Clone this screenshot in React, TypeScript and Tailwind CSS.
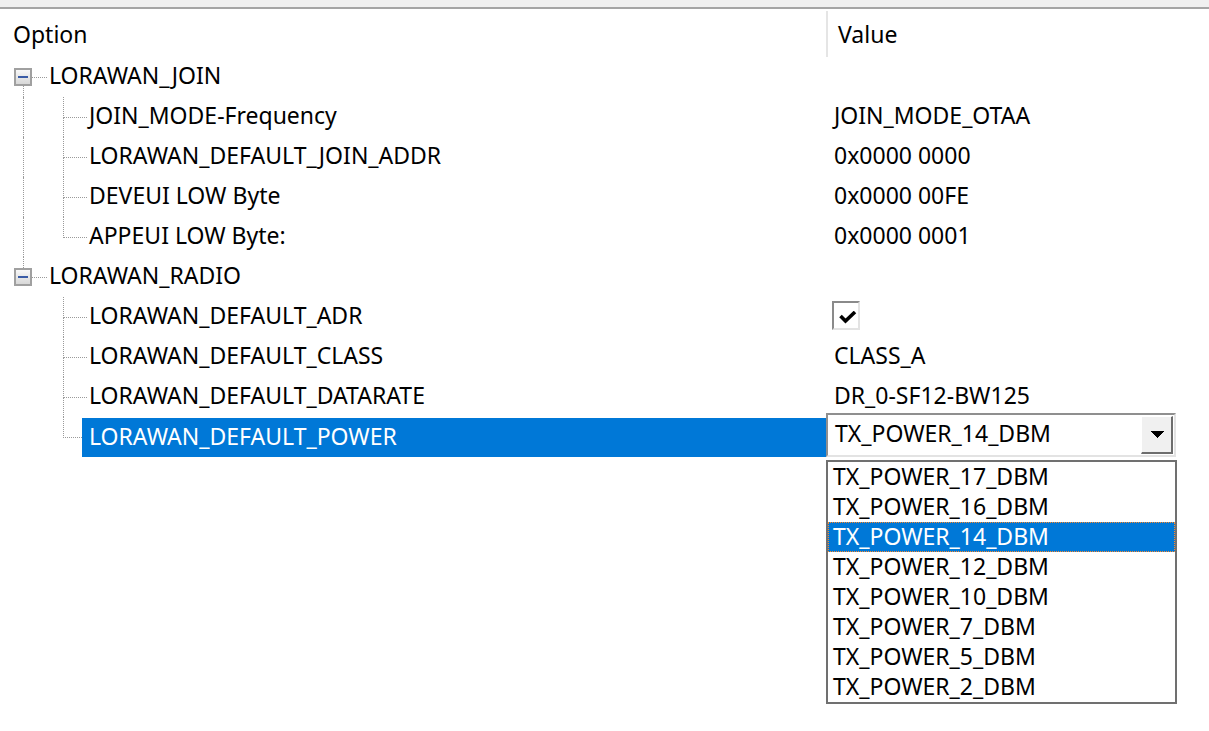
import React from "react";

type Row =
  | { kind: "parent"; label: string; first: boolean; hasNext: boolean }
  | {
      kind: "child";
      label: string;
      value?: string;
      check?: boolean;
      combo?: boolean;
      parentHasNext: boolean;
      last: boolean;
      selected?: boolean;
    };

const rows: Row[] = [
  { kind: "parent", label: "LORAWAN_JOIN", first: true, hasNext: true },
  { kind: "child", label: "JOIN_MODE-Frequency", value: "JOIN_MODE_OTAA", parentHasNext: true, last: false },
  { kind: "child", label: "LORAWAN_DEFAULT_JOIN_ADDR", value: "0x0000 0000", parentHasNext: true, last: false },
  { kind: "child", label: "DEVEUI LOW Byte", value: "0x0000 00FE", parentHasNext: true, last: false },
  { kind: "child", label: "APPEUI LOW Byte:", value: "0x0000 0001", parentHasNext: true, last: true },
  { kind: "parent", label: "LORAWAN_RADIO", first: false, hasNext: false },
  { kind: "child", label: "LORAWAN_DEFAULT_ADR", check: true, parentHasNext: false, last: false },
  { kind: "child", label: "LORAWAN_DEFAULT_CLASS", value: "CLASS_A", parentHasNext: false, last: false },
  { kind: "child", label: "LORAWAN_DEFAULT_DATARATE", value: "DR_0-SF12-BW125", parentHasNext: false, last: false },
  { kind: "child", label: "LORAWAN_DEFAULT_POWER", combo: true, parentHasNext: false, last: true, selected: true },
];

const options = [
  "TX_POWER_17_DBM",
  "TX_POWER_16_DBM",
  "TX_POWER_14_DBM",
  "TX_POWER_12_DBM",
  "TX_POWER_10_DBM",
  "TX_POWER_7_DBM",
  "TX_POWER_5_DBM",
  "TX_POWER_2_DBM",
];

const dot = "border-dotted border-[#9a9a9a]";

function Expander() {
  return (
    <div className="w-[18px] h-[18px] border-2 border-[#a0a0a0] bg-gradient-to-b from-[#f8f8f8] to-[#d8d8d8] flex items-center justify-center">
      <div className="w-[10px] h-[2px] bg-[#3a5ca6]" />
    </div>
  );
}

function Text({ children, className = "" }: { children: React.ReactNode; className?: string }) {
  return <span className={"leading-[36px] pb-[4px] whitespace-nowrap " + className}>{children}</span>;
}

function CheckBox() {
  return (
    <div className="w-[28px] h-[29px] border-t-2 border-l-2 border-t-[#8a8a8a] border-l-[#8a8a8a] border-b-2 border-r-2 border-b-[#e3e3e3] border-r-[#e3e3e3] bg-white flex items-start">
      <svg width="18" height="13" viewBox="0 0 18 13" className="mt-[8px] ml-[5px]">
        <path d="M1.5 5 L6.5 10 L16 1" stroke="#000" strokeWidth="3.6" fill="none" />
      </svg>
    </div>
  );
}

function Combo() {
  return (
    <div className="relative -mt-[4px]">
      <div className="w-[350px] h-[44px] border-t-2 border-l-2 border-t-[#8f8f8f] border-l-[#8f8f8f] border-b-2 border-r-2 border-b-[#e3e3e3] border-r-[#e3e3e3] bg-white flex items-stretch p-[1px]">
        <div className="flex-1 flex items-center pl-[6px]">
          <Text>TX_POWER_14_DBM</Text>
        </div>
        <div className="w-[32px] bg-[#f0f0f0] border-t border-l border-t-white border-l-white border-b-2 border-r-2 border-b-[#6d6d6d] border-r-[#6d6d6d] flex items-center justify-center">
          <svg width="14" height="8" viewBox="0 0 14 8" shapeRendering="crispEdges">
            <polygon points="0,0 14,0 7,7" fill="#000" />
          </svg>
        </div>
      </div>
      <div className="absolute left-0 top-full mt-[3px] w-[351px] border-2 border-[#707070] bg-white z-10">
        {options.map((o) => {
          const sel = o === "TX_POWER_14_DBM";
          return (
            <div
              key={o}
              className={
                "h-[30px] flex items-center pl-[4px] " +
                (sel ? "bg-[#0078d7] text-white border border-dotted border-[#ff8a2a]" : "border border-transparent")
              }
            >
              <span className="leading-[30px] pb-[2px] whitespace-nowrap">{o}</span>
            </div>
          );
        })}
      </div>
    </div>
  );
}

function ParentRow({ r }: { r: Extract<Row, { kind: "parent" }> }) {
  return (
    <div className="h-[40px] flex">
      <div className="w-[826px] flex shrink-0">
        <div className="w-[14px]" />
        <div className="w-[18px] flex flex-col">
          <div className={"h-[11px] ml-[9px] " + (r.first ? "" : "border-l " + dot)} />
          <Expander />
          <div className={"flex-1 ml-[9px] " + (r.hasNext ? "border-l " + dot : "")} />
        </div>
        <div className="w-[15px] flex flex-col">
          <div className={"h-[21px] border-b " + dot} />
        </div>
        <div className="flex items-center pl-[2px]">
          <Text>{r.label}</Text>
        </div>
      </div>
    </div>
  );
}

function ChildRow({ r }: { r: Extract<Row, { kind: "child" }> }) {
  return (
    <div className="h-[40px] flex">
      <div className="w-[826px] flex shrink-0">
        <div className="w-[23px]" />
        <div className={"w-[40px] " + (r.parentHasNext ? "border-l " + dot : "")} />
        <div className={(r.selected ? "w-[19px]" : "w-[24px]") + " flex flex-col"}>
          <div className={"h-[21px] border-l border-b " + dot} />
          <div className={"flex-1 " + (r.last ? "" : "border-l " + dot)} />
        </div>
        <div
          className={
            "flex-1 flex items-center " +
            (r.selected ? "bg-[#0078d7] text-white pl-[7px] mt-[1px]" : "pl-[2px]")
          }
        >
          <Text>{r.label}</Text>
        </div>
      </div>
      <div className="flex-1 flex items-center">
        {r.combo ? (
          <Combo />
        ) : r.check ? (
          <div className="pl-[6px] -mt-[3px]">
            <CheckBox />
          </div>
        ) : (
          <div className="pl-[8px] flex items-center">
            <Text>{r.value}</Text>
          </div>
        )}
      </div>
    </div>
  );
}

export default function App() {
  return (
    <div
      className="w-[1209px] h-[731px] bg-white overflow-hidden text-black text-[23px]"
      style={{ fontFamily: '"Noto Sans", "Open Sans", sans-serif' }}
    >
      <div className="h-[7px] bg-[#f0f0f0]" />
      <div className="h-[2px] bg-[#a5a5a5]" />
      <div className="h-[48px] flex">
        <div className="w-[826px] shrink-0 flex items-center pl-[13px]">
          <span className="leading-[36px] pt-[2px] whitespace-nowrap">Option</span>
        </div>
        <div className="w-[2px] mt-[2px] bg-[#e5e5e5]" />
        <div className="flex items-center pl-[10px]">
          <span className="leading-[36px] pt-[2px] whitespace-nowrap">Value</span>
        </div>
      </div>
      <div className="flex flex-col">
        {rows.map((r, i) =>
          r.kind === "parent" ? <ParentRow key={i} r={r} /> : <ChildRow key={i} r={r} />
        )}
      </div>
    </div>
  );
}
